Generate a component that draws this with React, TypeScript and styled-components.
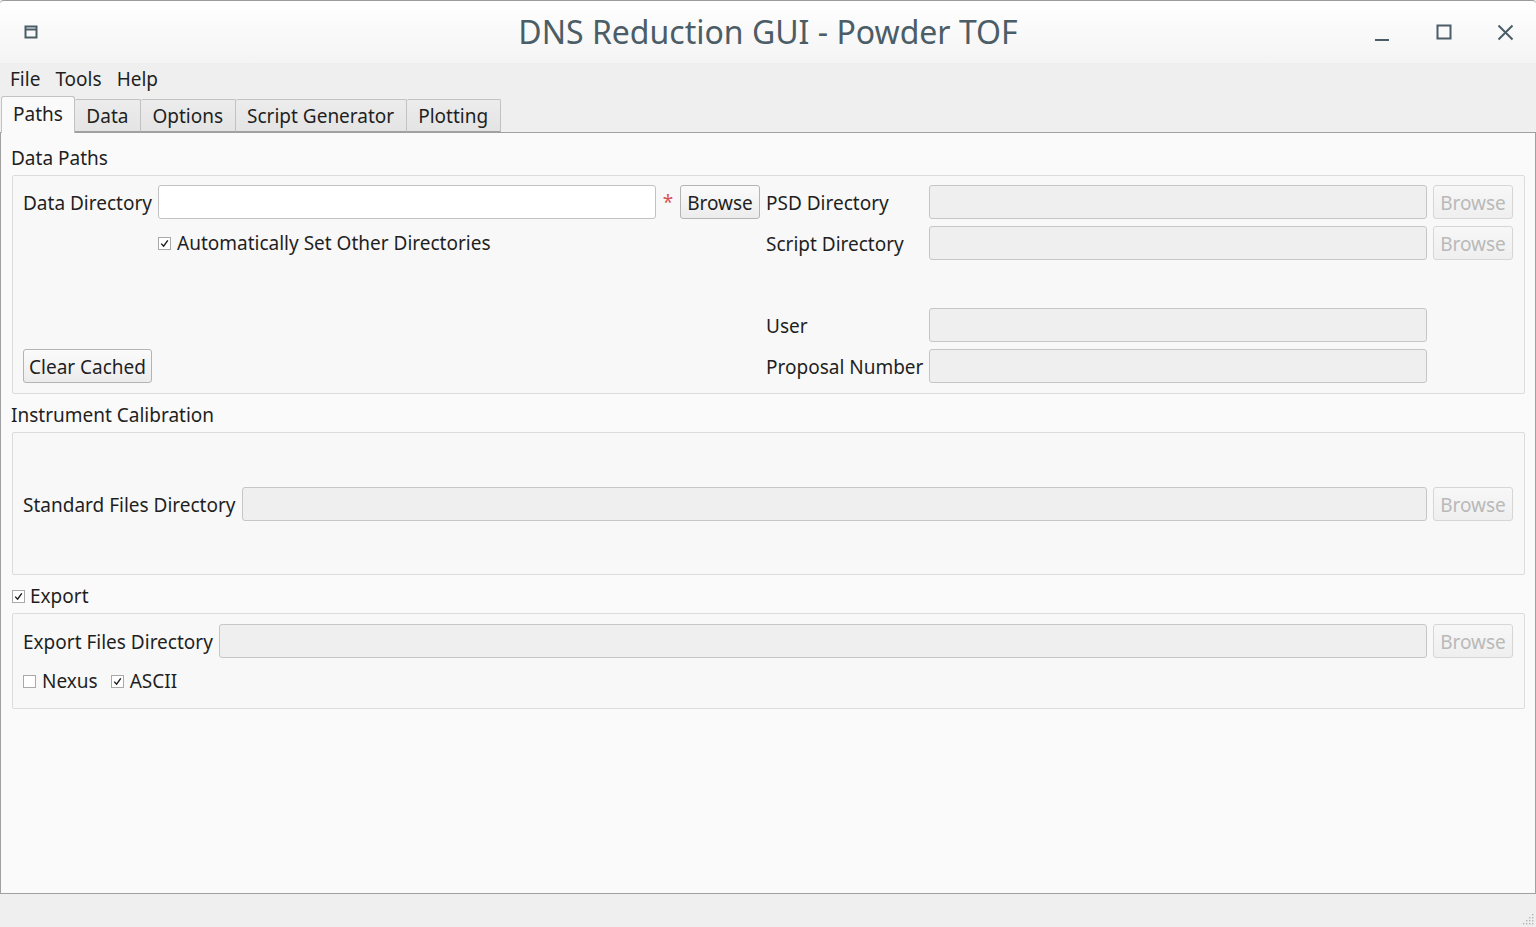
import React from "react";
import styled, { createGlobalStyle } from "styled-components";

const GlobalStyle = createGlobalStyle`
  html, body { margin: 0; padding: 0; height: 100%; overflow: hidden; }
  body { font-family: "Noto Sans", "DejaVu Sans", sans-serif; color: #1f1f1f; background: #efefef; }
  #root { height: 100vh; }
  * { box-sizing: border-box; }
`;

const Window = styled.div`
  height: 100%;
  display: flex;
  flex-direction: column;
  background: #efefef;
`;

const TitleBar = styled.div`
  height: 63px;
  flex: none;
  display: grid;
  grid-template-columns: 1fr auto 1fr;
  align-items: center;
  background: linear-gradient(#ffffff, #f4f4f4);
  border-top: 1px solid #9c9c9c;
  border-radius: 4px 4px 0 0;
  color: #4b5d66;
`;

const TitleIcon = styled.div`
  padding-left: 24px;
  display: flex;
  align-items: center;
  height: 100%;
`;

const TitleText = styled.div`
  font-size: 32px;
  line-height: 40px;
  padding-bottom: 1px;
`;

const WindowButtons = styled.div`
  justify-self: end;
  display: flex;
  align-items: center;
  padding-right: 22px;
`;

const WinBtn = styled.div`
  width: 62px;
  height: 30px;
  display: flex;
  align-items: center;
  justify-content: flex-end;
`;

const MenuBar = styled.div`
  height: 33px;
  flex: none;
  display: flex;
  align-items: center;
  padding-left: 3px;
  background: #efefef;
  font-size: 19px;
`;

const MenuItem = styled.span`
  padding: 0 7px 1px 7px;
  line-height: 30px;
  & + & { padding-left: 8px; }
`;

const TabBar = styled.div`
  height: 36px;
  flex: none;
  display: flex;
  align-items: flex-end;
  padding-left: 1px;
  position: relative;
  z-index: 1;
`;

const Tab = styled.div<{ $active?: boolean }>`
  height: ${(p) => (p.$active ? "37px" : "33px")};
  margin-bottom: ${(p) => (p.$active ? "-1px" : "0")};
  padding: 0 ${(p) => (p.$active ? "11px" : "11.5px")};
  padding-bottom: ${(p) => (p.$active ? "3px" : "0")};
  display: flex;
  align-items: center;
  font-size: 19px;
  border: 1px solid #c2c2c2;
  border-bottom: ${(p) => (p.$active ? "none" : "1px solid #a0a0a0")};
  border-left-width: ${(p) => (p.$active ? "1px" : "0")};
  border-radius: ${(p) => (p.$active ? "3px 3px 0 0" : "2px 2px 0 0")};
  background: ${(p) => (p.$active ? "#fafafa" : "linear-gradient(#ececec, #e4e4e4)")};
`;

const Panel = styled.div`
  flex: 1;
  min-height: 0;
  background: #fafafa;
  border: 1px solid #a0a0a0;
  display: flex;
  flex-direction: column;
  padding: 11px 10px 0 10px;
  font-size: 19px;
`;

const SectionTitle = styled.div`
  height: 27px;
  line-height: 27px;
  margin-top: 7px;
  padding-top: 1px;
  display: flex;
  align-items: center;
  &:first-child { margin-top: 0; }
`;

const GroupBox = styled.div<{ $pad: string }>`
  margin-top: 4px;
  margin-left: 1px;
  border: 1px solid #dcdcdc;
  border-radius: 2px;
  background: #f8f8f8;
  padding: ${(p) => p.$pad};
`;

const PathsGrid = styled.div`
  display: grid;
  grid-template-columns: 129px 1fr 12px 80px 157px 1fr 80px;
  grid-template-rows: repeat(5, 34px);
  column-gap: 6px;
  row-gap: 7px;
  align-items: center;
`;

const RowGrid = styled.div<{ $label: number }>`
  display: grid;
  grid-template-columns: ${(p) => p.$label}px 1fr 80px;
  grid-auto-rows: 34px;
  column-gap: 6px;
  align-items: center;
`;

type Place = { $col?: string; $row?: string };
const place = (p: Place) => `
  ${p.$col ? `grid-column: ${p.$col};` : ""}
  ${p.$row ? `grid-row: ${p.$row};` : ""}
`;

const Label = styled.span<Place>`
  white-space: nowrap;
  line-height: 27px;
  padding-top: 2px;
  ${place}
`;

const Input = styled.div<Place & { $disabled?: boolean }>`
  height: 34px;
  border: 1px solid ${(p) => (p.$disabled ? "#c6c6c6" : "#c2c2c2")};
  border-radius: 3px;
  background: ${(p) => (p.$disabled ? "#efefef" : "#ffffff")};
  ${place}
`;

const Asterisk = styled.span<Place>`
  color: #d9534f;
  text-align: center;
  line-height: 27px;
  ${place}
`;

const Button = styled.div<Place & { $disabled?: boolean; $fit?: boolean }>`
  height: 34px;
  padding: 1px 5px 0 5px;
  display: flex;
  align-items: center;
  justify-content: center;
  white-space: nowrap;
  border: 1px solid ${(p) => (p.$disabled ? "#d6d6d6" : "#b4b4b4")};
  border-radius: 3px;
  background: ${(p) => (p.$disabled ? "linear-gradient(#f7f7f7, #efefef)" : "linear-gradient(#fbfbfb, #ececec)")};
  color: ${(p) => (p.$disabled ? "#b9b9b9" : "#1f1f1f")};
  justify-self: ${(p) => (p.$fit ? "start" : "stretch")};
  ${place}
`;

const CheckRow = styled.div<Place>`
  display: flex;
  align-items: center;
  gap: 13px;
  height: 24px;
  padding-top: 1px;
  ${place}
`;

const Check = styled.label<{ $gap?: number; $indent?: number }>`
  display: flex;
  align-items: center;
  gap: ${(p) => p.$gap ?? 6}px;
  padding-left: ${(p) => p.$indent ?? 0}px;
  white-space: nowrap;
  line-height: 27px;
`;

const Box = styled.span`
  width: 13px;
  height: 13px;
  flex: none;
  border: 1px solid #a9a9a9;
  background: #ffffff;
  display: flex;
  align-items: center;
  justify-content: center;
`;

const ExportGrid = styled.div`
  display: flex;
  flex-direction: column;
  gap: 11px;
`;

const StatusBar = styled.div`
  height: 33px;
  flex: none;
  background: #efefef;
  display: flex;
  justify-content: flex-end;
  align-items: flex-end;
  padding: 0 2px 2px 0;
`;

const CheckBox: React.FC<{ checked?: boolean }> = ({ checked }) => (
  <Box>
    {checked && (
      <svg width="9" height="9" viewBox="0 0 9 9">
        <path d="M1.2 4.6 L3.6 7.2 L7.8 1.4" fill="none" stroke="#1a1a1a" strokeWidth="1.4" />
      </svg>
    )}
  </Box>
);

export default function App() {
  return (
    <>
      <GlobalStyle />
      <Window>
        <TitleBar>
          <TitleIcon>
            <svg width="14" height="14" viewBox="0 0 14 14">
              <rect x="1.5" y="1.5" width="11" height="11" fill="none" stroke="#4b5d66" strokeWidth="2" />
              <rect x="2" y="3.5" width="10" height="2" fill="#4b5d66" />
            </svg>
          </TitleIcon>
          <TitleText>DNS Reduction GUI - Powder TOF</TitleText>
          <WindowButtons>
            <WinBtn>
              <svg width="16" height="30" viewBox="0 0 16 30">
                <line x1="1" y1="23" x2="15" y2="23" stroke="#4b5d66" strokeWidth="2" />
              </svg>
            </WinBtn>
            <WinBtn>
              <svg width="16" height="16" viewBox="0 0 16 16">
                <rect x="1.5" y="1.5" width="13" height="13" fill="none" stroke="#4b5d66" strokeWidth="2" />
              </svg>
            </WinBtn>
            <WinBtn>
              <svg width="17" height="17" viewBox="0 0 17 17">
                <path d="M1.5 1.5 L15.5 15.5 M15.5 1.5 L1.5 15.5" stroke="#4b5d66" strokeWidth="2" />
              </svg>
            </WinBtn>
          </WindowButtons>
        </TitleBar>
        <MenuBar>
          <MenuItem>File</MenuItem>
          <MenuItem>Tools</MenuItem>
          <MenuItem>Help</MenuItem>
        </MenuBar>
        <TabBar>
          <Tab $active>Paths</Tab>
          <Tab>Data</Tab>
          <Tab>Options</Tab>
          <Tab>Script Generator</Tab>
          <Tab>Plotting</Tab>
        </TabBar>
        <Panel>
          <SectionTitle>Data Paths</SectionTitle>
          <GroupBox $pad="9px 11px 10px 10px">
            <PathsGrid>
              <Label $col="1" $row="1">Data Directory</Label>
              <Input $col="2" $row="1" />
              <Asterisk $col="3" $row="1">*</Asterisk>
              <Button $col="4" $row="1">Browse</Button>
              <Label $col="5" $row="1">PSD Directory</Label>
              <Input $disabled $col="6" $row="1" />
              <Button $disabled $col="7" $row="1">Browse</Button>

              <CheckRow $col="2 / 5" $row="2">
                <Check>
                  <CheckBox checked />
                  Automatically Set Other Directories
                </Check>
              </CheckRow>
              <Label $col="5" $row="2">Script Directory</Label>
              <Input $disabled $col="6" $row="2" />
              <Button $disabled $col="7" $row="2">Browse</Button>

              <Label $col="5" $row="4">User</Label>
              <Input $disabled $col="6" $row="4" />

              <Button $fit $col="1 / 3" $row="5">Clear Cached</Button>
              <Label $col="5" $row="5">Proposal Number</Label>
              <Input $disabled $col="6" $row="5" />
            </PathsGrid>
          </GroupBox>

          <SectionTitle>Instrument Calibration</SectionTitle>
          <GroupBox $pad="54px 11px 53px 10px">
            <RowGrid $label={213}>
              <Label>Standard Files Directory</Label>
              <Input $disabled />
              <Button $disabled>Browse</Button>
            </RowGrid>
          </GroupBox>

          <SectionTitle>
            <Check $gap={5} $indent={1}>
              <CheckBox checked />
              Export
            </Check>
          </SectionTitle>
          <GroupBox $pad="10px 11px 15px 10px">
            <ExportGrid>
              <RowGrid $label={190}>
                <Label>Export Files Directory</Label>
                <Input $disabled />
                <Button $disabled>Browse</Button>
              </RowGrid>
              <CheckRow>
                <Check>
                  <CheckBox />
                  Nexus
                </Check>
                <Check>
                  <CheckBox checked />
                  ASCII
                </Check>
              </CheckRow>
            </ExportGrid>
          </GroupBox>
        </Panel>
        <StatusBar>
          <svg width="12" height="12" viewBox="0 0 12 12">
            {[
              [10, 1],
              [7, 4], [10, 4],
              [4, 7], [7, 7], [10, 7],
              [1, 10], [4, 10], [7, 10], [10, 10],
            ].map(([x, y], i) => (
              <rect key={i} x={x} y={y} width="1.4" height="1.4" fill="#b5b5b5" />
            ))}
          </svg>
        </StatusBar>
      </Window>
    </>
  );
}
